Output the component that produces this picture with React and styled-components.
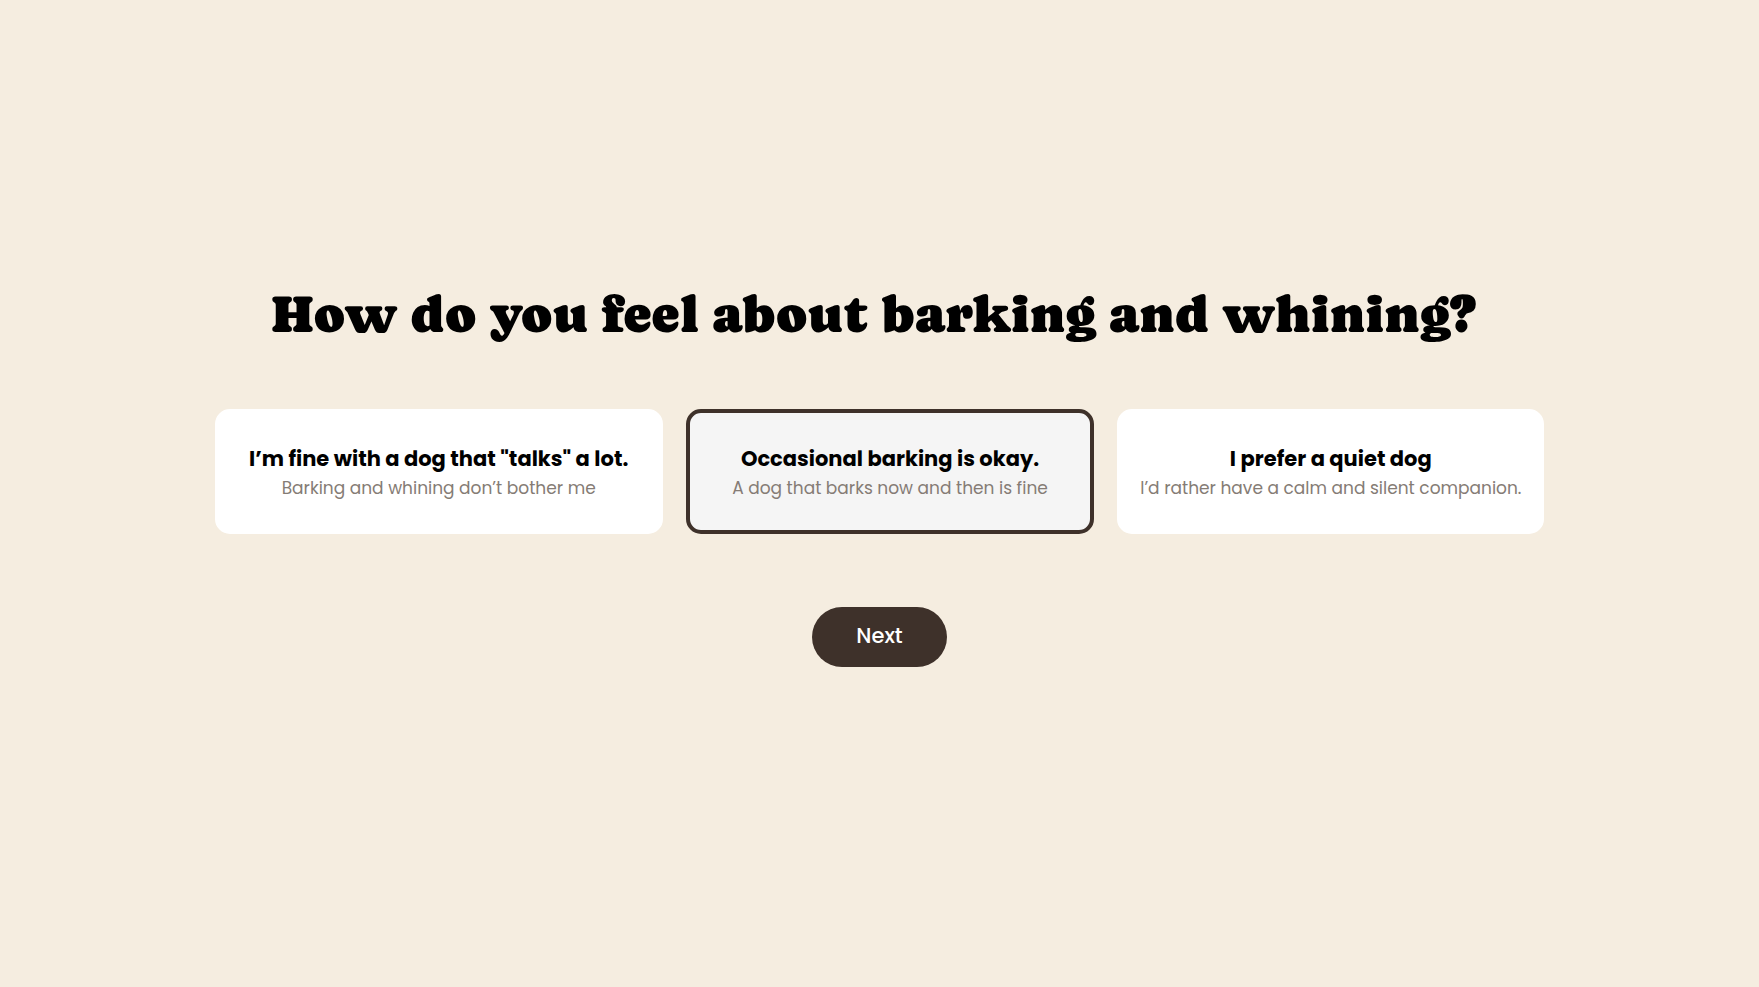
import React, { useState } from "react";
import styled, { createGlobalStyle } from "styled-components";

const GlobalStyle = createGlobalStyle`
  *, *::before, *::after { box-sizing: border-box; }
  body {
    margin: 0;
    background: #f5ede0;
    color: #000;
    font-family: Poppins, Inter, "Liberation Sans", sans-serif;
  }
`;

const Page = styled.main`
  display: flex;
  flex-direction: column;
  align-items: center;
  justify-content: center;
  min-height: 100vh;
  padding: 24px 24px 60px;
`;

const QuizForm = styled.form`
  display: flex;
  flex-direction: column;
  align-items: center;
  width: 100%;
  max-width: 1330px;
`;

const Question = styled.h1`
  margin: 0 0 65px;
  padding-right: 12px;
  font-family: Caprasimo, "DejaVu Serif", serif;
  font-size: 53px;
  font-weight: 400;
  line-height: 60px;
  text-align: center;
`;

const Options = styled.div`
  display: grid;
  grid-template-columns: 448fr 408fr 427fr;
  gap: 23px;
  width: 100%;
  margin-bottom: 73px;

  @media (max-width: 1200px) {
    grid-template-columns: 1fr;
  }
`;

const OptionCard = styled.label`
  position: relative;
  display: flex;
  flex-direction: column;
  align-items: center;
  justify-content: center;
  min-height: 125px;
  padding: 24px 16px;
  border: 4px solid ${({ $selected }) => ($selected ? "#3e312a" : "#fff")};
  border-radius: 15px;
  background: ${({ $selected }) => ($selected ? "#f5f5f5" : "#fff")};
  text-align: center;
  cursor: pointer;
`;

const OptionInput = styled.input`
  position: absolute;
  inset: 0;
  margin: 0;
  opacity: 0;
  cursor: pointer;
`;

const OptionTitle = styled.span`
  font-size: 21px;
  font-weight: 700;
  line-height: 32px;
`;

const OptionText = styled.span`
  color: #857c75;
  font-size: 17px;
  line-height: 26px;
`;

const NextButton = styled.button`
  padding: 0 44px 2px;
  border: 0;
  border-radius: 30px;
  background: #3e312a;
  color: #fff;
  font-family: inherit;
  font-size: 21px;
  font-weight: 500;
  line-height: 58px;
  cursor: pointer;
`;

const options = [
  { id: "talkative", title: "I’m fine with a dog that \"talks\" a lot.", text: "Barking and whining don’t bother me" },
  { id: "occasional", title: "Occasional barking is okay.", text: "A dog that barks now and then is fine" },
  { id: "quiet", title: "I prefer a quiet dog", text: "I’d rather have a calm and silent companion." },
];

export default function App() {
  const [selected, setSelected] = useState("occasional");

  return (
    <>
      <GlobalStyle />
      <Page>
        <QuizForm onSubmit={(event) => event.preventDefault()}>
          <Question id="question">How do you feel about barking and whining?</Question>
          <Options role="radiogroup" aria-labelledby="question">
            {options.map(({ id, title, text }) => (
              <OptionCard key={id} htmlFor={id} $selected={selected === id}>
                <OptionInput
                  type="radio"
                  name="barking"
                  id={id}
                  checked={selected === id}
                  onChange={() => setSelected(id)}
                />
                <OptionTitle>{title}</OptionTitle>
                <OptionText>{text}</OptionText>
              </OptionCard>
            ))}
          </Options>
          <NextButton type="submit">Next</NextButton>
        </QuizForm>
      </Page>
    </>
  );
}
